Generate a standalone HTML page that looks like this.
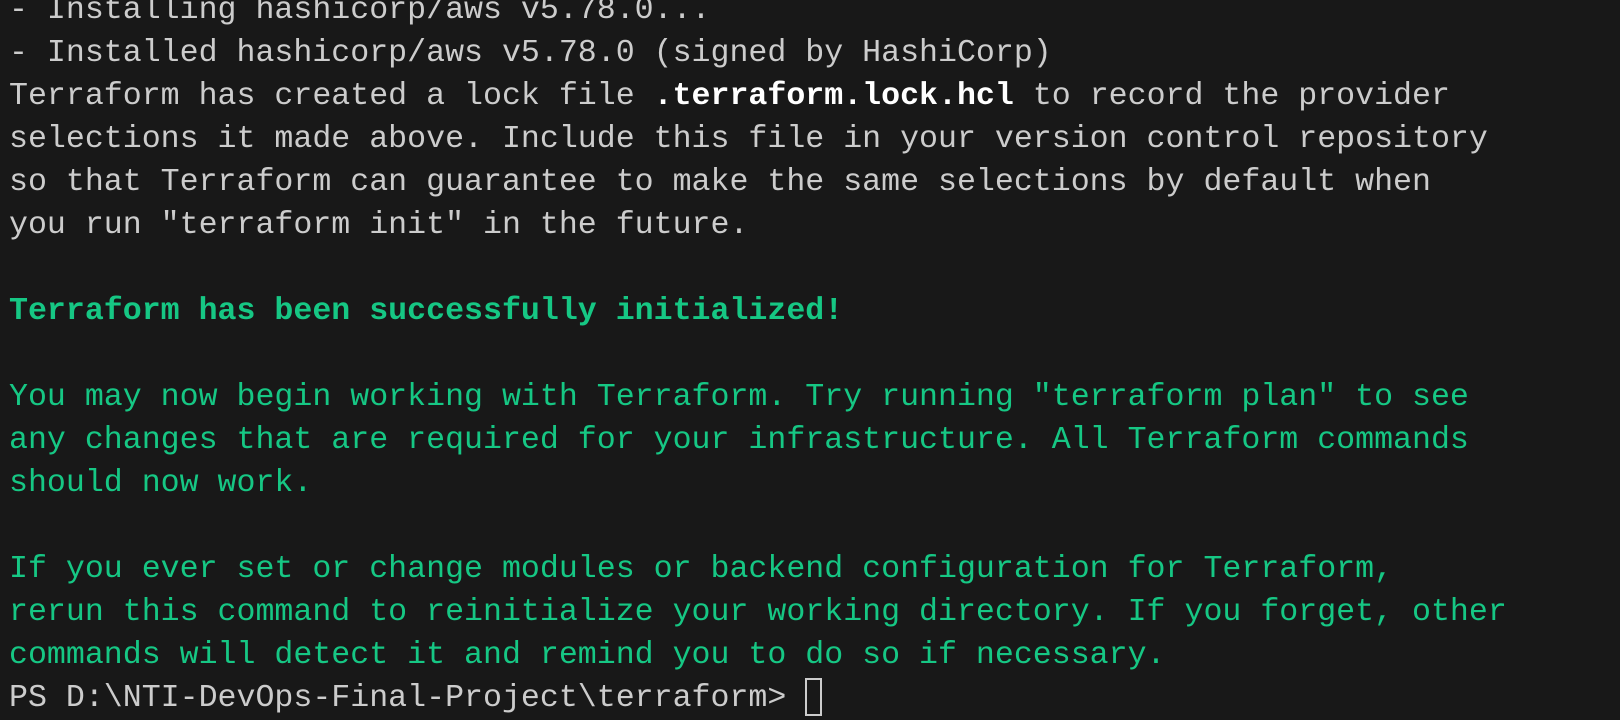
<!DOCTYPE html>
<html><head><meta charset="utf-8"><style>
html,body{margin:0;padding:0;background:#181818;width:1620px;height:712px;overflow:hidden}
pre{margin:0;position:absolute;left:9px;top:-11px;font-family:"Liberation Mono","DejaVu Sans Mono",monospace;font-size:31.6px;line-height:43px;color:#cccccc;white-space:pre}
.g{color:#16c784}
.b{font-weight:bold}
.w{color:#ffffff;font-weight:bold}
.cur{display:inline-block;width:17px;height:38px;border:2px solid #cccccc;box-sizing:border-box;vertical-align:-10px}
</style></head><body><pre>- Installing hashicorp/aws v5.78.0...
- Installed hashicorp/aws v5.78.0 (signed by HashiCorp)
Terraform has created a lock file <span class="w">.terraform.lock.hcl</span> to record the provider
selections it made above. Include this file in your version control repository
so that Terraform can guarantee to make the same selections by default when
you run "terraform init" in the future.

<span class="g b">Terraform has been successfully initialized!</span>

<span class="g">You may now begin working with Terraform. Try running "terraform plan" to see
any changes that are required for your infrastructure. All Terraform commands
should now work.

If you ever set or change modules or backend configuration for Terraform,
rerun this command to reinitialize your working directory. If you forget, other
commands will detect it and remind you to do so if necessary.</span>
PS D:\NTI-DevOps-Final-Project\terraform> <span class="cur"></span></pre></body></html>
